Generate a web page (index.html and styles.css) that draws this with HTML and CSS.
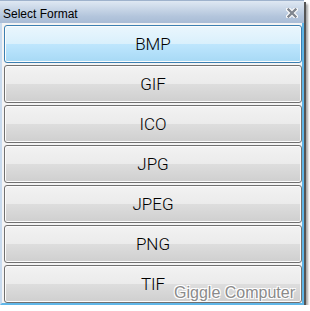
FILE: index.html
```html
<!DOCTYPE html>
<html lang="en">
<head>
  <meta charset="UTF-8">
  <title>Select Format</title>
  <link rel="stylesheet" href="styles.css">
</head>
<body>

<div class="window">
  <div class="title-bar">
    <span class="title">Select Format</span>
    <svg class="close" width="12" height="10" viewBox="0 0 12 10">
      <path d="M2.5 1.5 L9.5 8.5 M9.5 1.5 L2.5 8.5" stroke="#fff" stroke-width="4.5" stroke-linecap="square"/>
      <path d="M2.5 1.5 L9.5 8.5 M9.5 1.5 L2.5 8.5" stroke="#80868f" stroke-width="2.4" stroke-linecap="square"/>
    </svg>
  </div>

  <div class="format-list">
    <button class="format-btn active">BMP</button>
    <button class="format-btn">GIF</button>
    <button class="format-btn">ICO</button>
    <button class="format-btn">JPG</button>
    <button class="format-btn">JPEG</button>
    <button class="format-btn">PNG</button>
    <button class="format-btn">TIF</button>
  </div>

  <div class="watermark">Giggle Computer</div>
</div>

</body>
</html>
```

FILE: styles.css
```css
body {
  margin: 0;
  background: #fff;
  font-family: "Liberation Sans", Arial, sans-serif;
}

.window {
  position: relative;
  width: 304px;
  height: 305px;
  box-sizing: border-box;
  background: #e3edf8;
  border-left: 2px solid #c9dbef;
  border-right: 2px solid #5fb6e8;
  border-bottom: 2px solid #5fb6e8;
  box-shadow: 2px 2px 0 #555, 4px 4px 2px rgba(0, 0, 0, 0.35);
}

.title-bar {
  display: flex;
  align-items: center;
  justify-content: space-between;
  height: 23px;
  margin-left: -2px;
  margin-right: -2px;
  padding: 0 6px 0 3px;
  box-sizing: border-box;
  background: linear-gradient(#dfe8f3, #b3c5dc 70%, #a9bcd6);
  border-top: 1px solid #9fb2cc;
}

.title {
  font-size: 12px;
  color: #000;
  margin-top: 3px;
}

.close {
  margin-top: 2px;
}

.format-list {
  display: flex;
  flex-direction: column;
  gap: 2px;
  padding: 2px 0 0 2px;
  background: #f4f4f4;
}

.format-btn {
  height: 38px;
  border: 1px solid #707070;
  border-radius: 3px;
  box-shadow: inset 0 0 0 1px #fcfcfc;
  background: linear-gradient(#f2f2f2, #ebebeb 50%, #dddddd 51%, #cfcfcf);
  font-family: Roboto, "Liberation Sans", Arial, sans-serif;
  font-weight: 300;
  font-size: 17px;
  color: #000;
  padding: 0;
  cursor: pointer;
}

.format-btn.active {
  border-color: #3c7fb1;
  background: linear-gradient(#eaf6fd, #d9f0fc 50%, #bee6fd 51%, #a7d9f5);
}

.watermark {
  position: absolute;
  right: 7px;
  bottom: 1px;
  font-size: 16px;
  color: #8a8a8a;
  text-shadow: 1px 1px 0 #fff, -1px -1px 0 #fff, 1px -1px 0 #fff, -1px 1px 0 #fff;
}
```
